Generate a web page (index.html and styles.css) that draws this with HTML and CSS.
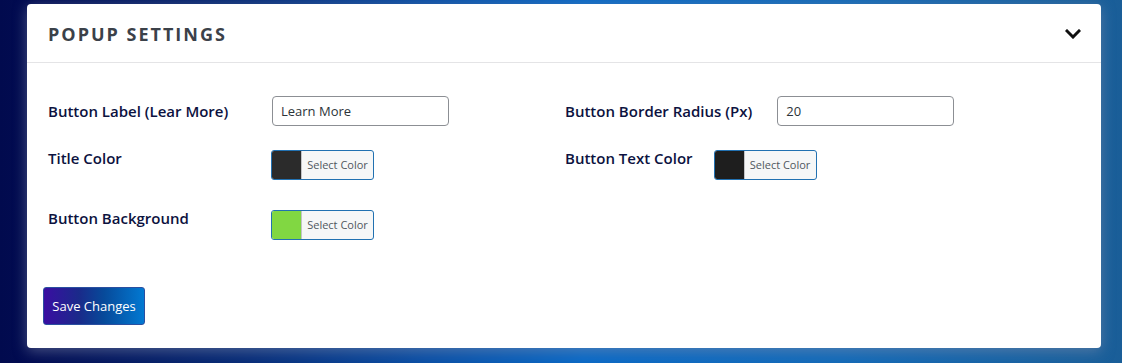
FILE: index.html
```html
<!DOCTYPE html>
<html lang="en">
<head>
<meta charset="utf-8">
<title>Popup Settings</title>
<link rel="stylesheet" href="styles.css">
</head>
<body>
<div class="page">
  <section class="card">
    <header class="card-head">
      <h2 class="card-title">POPUP SETTINGS</h2>
      <svg class="chevron" width="16" height="10" viewBox="0 0 16 10" aria-hidden="true">
        <path d="M2 2 L8 8 L14 2" fill="none" stroke="#111" stroke-width="3" stroke-linecap="square" stroke-linejoin="miter"/>
      </svg>
    </header>
    <div class="card-body">
      <div class="grid">
        <div class="field center">
          <label class="lbl fixed">Button Label (Lear More)</label>
          <input class="txt" type="text" value="Learn More">
        </div>
        <div class="field center">
          <label class="lbl auto">Button Border Radius (Px)</label>
          <input class="txt" type="text" value="20">
        </div>
        <div class="field top">
          <label class="lbl fixed">Title Color</label>
          <button class="picker" type="button"><span class="swatch dark"></span><span class="pick-text">Select Color</span></button>
        </div>
        <div class="field top">
          <label class="lbl auto">Button Text Color</label>
          <button class="picker" type="button"><span class="swatch black"></span><span class="pick-text">Select Color</span></button>
        </div>
        <div class="field top">
          <label class="lbl fixed">Button Background</label>
          <button class="picker" type="button"><span class="swatch green"></span><span class="pick-text">Select Color</span></button>
        </div>
      </div>
      <div class="actions">
        <button class="save" type="button">Save Changes</button>
      </div>
    </div>
  </section>
</div>
</body>
</html>
```

FILE: styles.css
```css
* { box-sizing: border-box; }
html, body { margin: 0; padding: 0; }
body {
  width: 1122px;
  height: 363px;
  overflow: hidden;
  font-family: "Open Sans", "Noto Sans", sans-serif;
  background: linear-gradient(to right, #010a4e 0%, #020c52 3%, #072c78 22%, #0a4fa6 38%, #0a69c6 52%, #136ab8 75%, #1a5e98 100%);
}
.page {
  padding: 4px 21px 0 27px;
}
.card {
  width: 1074px;
  height: 344px;
  background: #fff;
  border-radius: 4px;
  box-shadow: 0 3px 14px rgba(130, 140, 170, 0.55);
  display: flex;
  flex-direction: column;
}
.card-head {
  height: 59px;
  border-bottom: 1px solid #e4e4e6;
  display: flex;
  align-items: center;
  justify-content: space-between;
  padding: 0 20px 0 21px;
}
.card-title {
  margin: 0;
  font-size: 18px;
  font-weight: 700;
  letter-spacing: 2px;
  color: #3b4149;
  line-height: 24px;
  padding-top: 1px;
}
.chevron { display: block; margin-top: 2px; }
.card-body {
  padding: 33px 21px 0 16px;
}
.grid {
  display: grid;
  grid-template-columns: 517px 1fr;
  row-gap: 24px;
  padding-left: 5px;
}
.field {
  display: flex;
}
.field.center { align-items: center; }
.field.top { align-items: flex-start; margin-bottom: 6px; }
.lbl {
  font-size: 15px;
  font-weight: 600;
  color: #0c1240;
  line-height: 16px;
}
.lbl.fixed { width: 224px; flex: none; }
.lbl.auto { margin-right: 25px; }
.field.top .lbl.auto { margin-right: 22px; }
.txt {
  width: 177px;
  height: 30px;
  border: 1px solid #8c8f94;
  border-radius: 4px;
  padding: 0 8px;
  font-family: inherit;
  font-size: 13px;
  color: #2c3338;
  background: #fff;
}
.picker {
  display: flex;
  width: 103px;
  height: 30px;
  padding: 0;
  margin-left: -1px;
  border: 1px solid #2271b1;
  border-radius: 3px;
  background: #f6f7f7;
  overflow: hidden;
  cursor: pointer;
  font-family: inherit;
}
.swatch {
  width: 30px;
  height: 100%;
  flex: none;
  border-right: 1px solid #c3c4c7;
}
.swatch.dark { background: #2b2b2b; }
.swatch.black { background: #1e1e1e; }
.swatch.green { background: #81d742; }
.pick-text {
  flex: 1;
  align-self: center;
  text-align: center;
  font-size: 11px;
  color: #50575e;
  line-height: 14px;
}
.actions {
  padding-top: 41px;
}
.save {
  width: 102px;
  height: 38px;
  border: 1px solid #2a4fa0;
  border-radius: 3px;
  background: linear-gradient(to right, #3a0ea2 0%, #1a2a8a 35%, #074a9a 60%, #0279d2 100%);
  color: #fff;
  font-family: inherit;
  font-size: 13px;
  padding: 0;
  cursor: pointer;
}
```
